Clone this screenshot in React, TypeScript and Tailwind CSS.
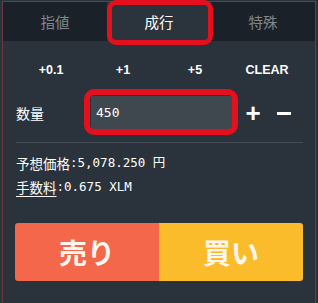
import React from "react";

export default function App() {
  const mono = { fontFamily: '"DejaVu Sans Mono", "Noto Sans CJK JP", monospace' } as React.CSSProperties;
  return (
    <div className="relative w-[318px] h-[303px] overflow-hidden bg-[#2a333b] pt-[1px] px-[2px]" style={{ fontFamily: '"Noto Sans CJK JP", "Noto Sans", sans-serif' }}>
      <div className="h-[302px] border-l border-r border-t border-[#6d3a3f] bg-[#2a333b] flex flex-col">
        {/* tabs */}
        <div className="grid grid-cols-3 h-[39px] bg-[#1b2128]">
          <div className="flex items-center justify-center text-[14.5px] text-[#80878d]">指値</div>
          <div className="flex items-center justify-center text-[14.5px] text-white bg-[#2b343c]">成行</div>
          <div className="flex items-center justify-center text-[14.5px] text-[#80878d]">特殊</div>
        </div>
        <div className="px-[12px] flex flex-col">
          {/* quick buttons */}
          <div className="grid grid-cols-4 h-[20px] mt-[19px] text-white text-[12.5px] font-bold" style={{ fontFamily: '"Liberation Sans", Arial, sans-serif' }}>
            <div className="flex items-center justify-center">+0.1</div>
            <div className="flex items-center justify-center">+1</div>
            <div className="flex items-center justify-center">+5</div>
            <div className="flex items-center justify-center">CLEAR</div>
          </div>
          {/* quantity */}
          <div className="flex items-center mt-[15px] h-[36px]">
            <div className="w-[76px] pl-[1px] text-[14px] text-white">数量</div>
            <div className="w-[141px] h-[35px] bg-[#40484f] flex items-center pl-[5px] text-[13px] text-white" style={mono}>450</div>
            <div className="ml-[11px] text-white text-[26px] font-bold leading-none w-[20px] text-center" style={{ fontFamily: '"Liberation Sans", Arial, sans-serif' }}>+</div>
            <div className="ml-[14px] w-[14px] h-[3px] bg-white"></div>
          </div>
          {/* divider */}
          <div className="mt-[11px] ml-[1px] h-px bg-[#444d55]"></div>
          {/* info */}
          <div className="mt-[10px] flex items-center h-[20px] text-white">
            <span className="text-[13.5px] pl-[1px]">予想価格</span>
            <span className="text-[12.5px]" style={mono}>:5,078.250 円</span>
          </div>
          <div className="mt-[4px] flex items-center h-[20px] text-white">
            <span className="text-[13.5px] pl-[1px] underline underline-offset-[3px]">手数料</span>
            <span className="text-[12.5px]" style={mono}>:0.675 XLM</span>
          </div>
          {/* buttons */}
          <div className="mt-[26px] grid grid-cols-2 h-[58px] rounded-[3px] overflow-hidden">
            <div className="bg-[#f5674a] flex items-center justify-center text-[28px] font-bold text-[#fff6ef]">売り</div>
            <div className="bg-[#fbbc2b] flex items-center justify-center text-[28px] font-bold text-[#fff6ef]">買い</div>
          </div>
        </div>
      </div>
      {/* annotations */}
      <div className="absolute left-[107px] top-0 w-[106px] h-[45px] border-[5px] border-[#e5101d] rounded-[9px]"></div>
      <div className="absolute left-[84px] top-[89px] w-[154px] h-[46px] border-[6px] border-[#e5101d] rounded-[10px]"></div>
    </div>
  );
}
